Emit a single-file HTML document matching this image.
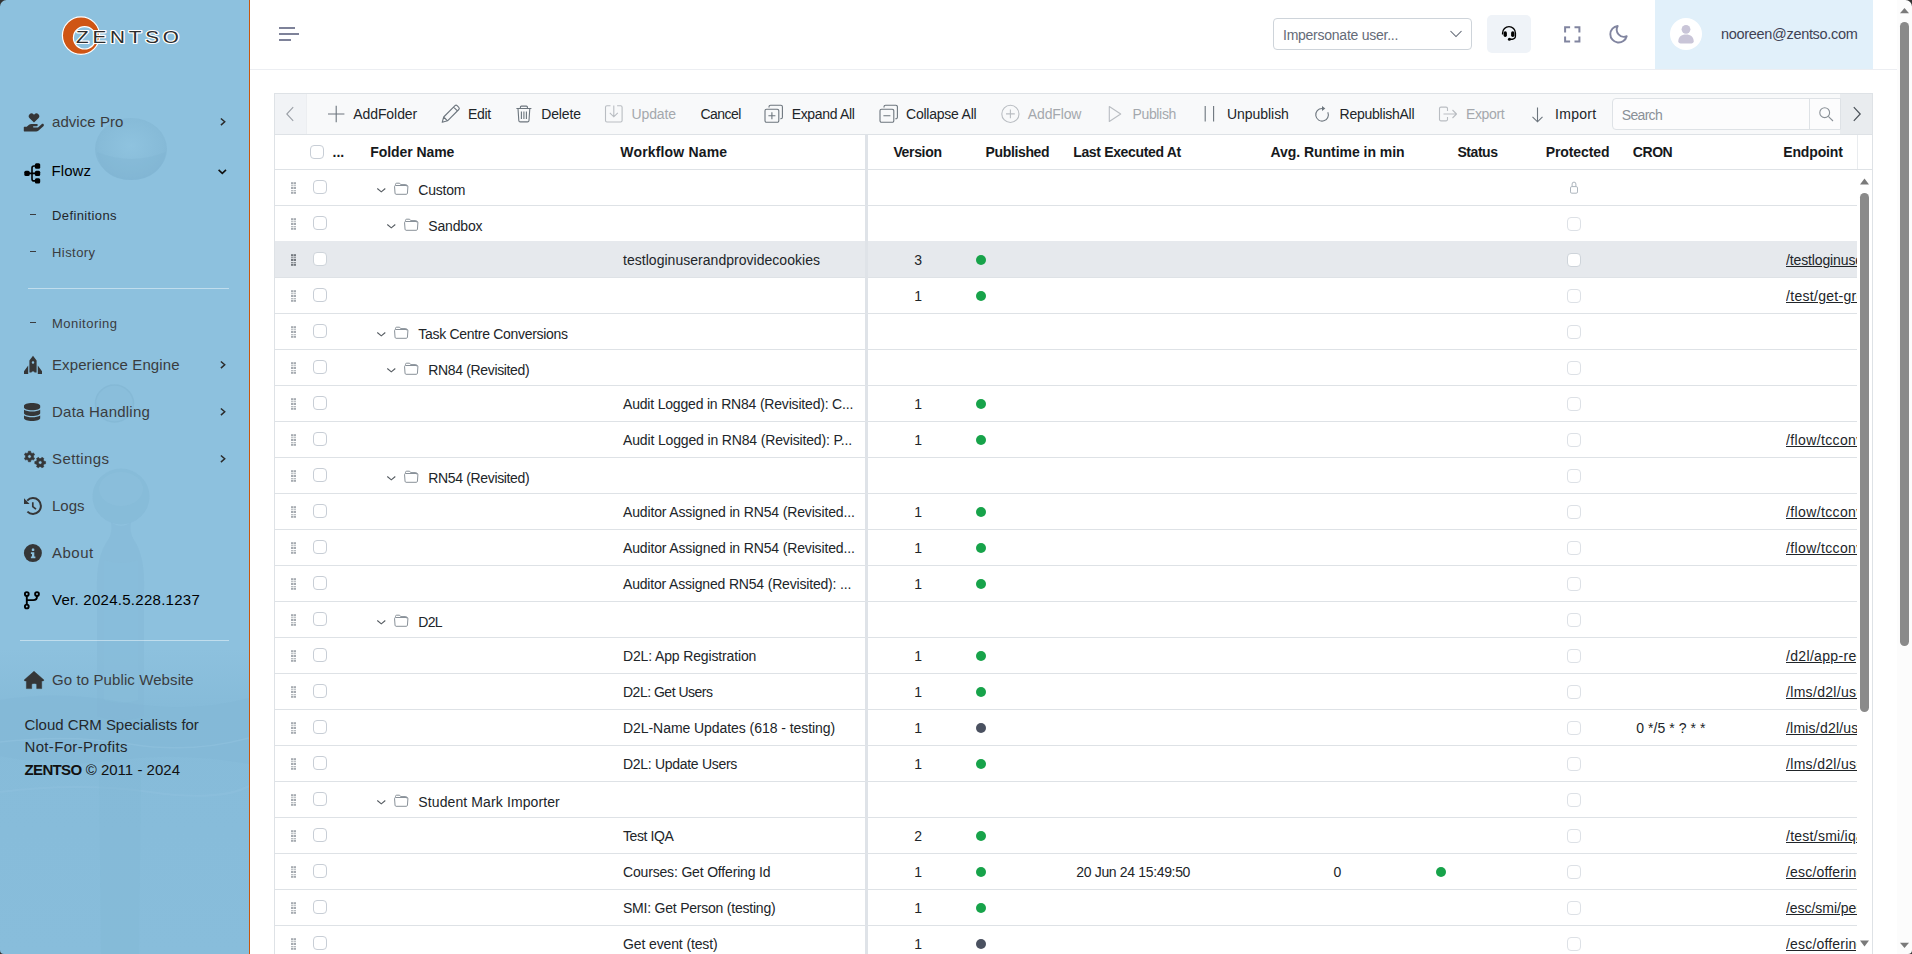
<!DOCTYPE html>
<html lang="en"><head><meta charset="utf-8"><title>Flowz Definitions</title>
<style>
*{box-sizing:border-box;margin:0;padding:0}
html,body{width:1912px;height:954px;overflow:hidden;background:#fff}
body{position:relative;font-family:"Liberation Sans",sans-serif;font-size:14px;color:#212529}
.t{position:absolute;white-space:nowrap;line-height:20px;height:20px}
svg{position:absolute;overflow:visible}
.abs{position:absolute}
/* sidebar */
.sidebar{position:absolute;left:0;top:0;width:250px;height:954px;border-right:1px solid #c8560c;background:#8cc0dd;overflow:hidden}
.sidebar .bgimg{position:absolute;left:0;top:0;width:249px;height:954px}
.sidebar .sep{position:absolute;height:1px;background:rgba(255,255,255,.45)}
/* topbar */
.topbar{position:absolute;left:250px;top:0;width:1647px;height:70px;border-bottom:1px solid #eceef2;background:#fff}
.cb{width:14px;height:14px;border:1px solid #c8ced6;border-radius:4px;background:#fff}
.cb.p{border-color:#dde1e6}
.cb.w{border-color:#ced4da}
.rl{left:275px;width:1582px;height:1px;background:#dee2e6}
.dot{width:10px;height:10px;border-radius:50%}
.ep{text-decoration:underline;overflow:hidden;color:#212529;font-size:14px}

</style></head>
<body>
<aside class="sidebar">
<svg class="bgimg" width="249" height="954" viewBox="0 0 249 954">
<defs>
<linearGradient id="bgv" x1="0" y1="0" x2="0" y2="1"><stop offset="0" stop-color="#8dc1de"/><stop offset=".68" stop-color="#8dc1de"/><stop offset=".74" stop-color="#86bbd9"/><stop offset="1" stop-color="#88bddb"/></linearGradient>
<radialGradient id="drop" cx=".5" cy=".45" r=".55"><stop offset="0" stop-color="#8fc3df"/><stop offset=".8" stop-color="#86bad7"/><stop offset="1" stop-color="#82b6d4"/></radialGradient>
</defs>
<rect width="249" height="954" fill="url(#bgv)"/>
<ellipse cx="131" cy="149" rx="36" ry="31" fill="url(#drop)" opacity=".9"/>
<path d="M97 152 Q131 166 166 152 Q160 180 131 180 Q102 180 97 152Z" fill="#7fb3d1" opacity=".4"/>
<ellipse cx="114.500" cy="403.500" rx="19" ry="18.500" fill="#8abedb" stroke="#84b8d5" stroke-width="1.500" opacity=".8"/>
<ellipse cx="121" cy="496.500" rx="28.500" ry="28" fill="#86bad7" opacity=".75"/>
<ellipse cx="121" cy="489" rx="22" ry="17" fill="#8bbfdc" opacity=".7"/>
<path d="M111 522 Q121 530 131 522 Q129 532 134 540 Q145 556 144 590 L144 716 Q121 724 97 716 L97 590 Q96 556 108 540 Q113 532 111 522Z" fill="#84b8d6" opacity=".5"/>
<path d="M104 560 Q121 566 138 560 L138 700 Q121 706 104 700Z" fill="#8abedb" opacity=".45"/>
<path d="M0 700 Q60 690 121 702 Q190 714 249 698 L249 764 Q180 752 121 760 Q60 768 0 756Z" fill="#7fb4d2" opacity=".32"/>
<path d="M0 742 Q70 734 130 744 T249 738" fill="none" stroke="#9acae3" stroke-width="1.500" opacity=".3"/>
<path d="M0 792 Q80 782 150 792 T249 786" fill="none" stroke="#96c7e1" stroke-width="2" opacity=".28"/>
<path d="M99 770 L141 770 L139 954 L101 954Z" fill="#82b7d5" opacity=".35"/>
</svg>
<svg class="logo" style="left:55px;top:8px" width="140" height="56" viewBox="55 8 140 56">
<path fill="#cf5514" stroke="#fff" stroke-width="1.2" fill-rule="evenodd" d="M81 16.8a18.6 18.8 0 1 0 0.01 37.6a18.6 18.8 0 1 0 -0.01 -37.6ZM84.6 26.6a11.2 11.2 0 1 1 -0.01 22.4a11.2 11.2 0 1 1 0.01 -22.4Z"/>
<text x="76" y="42.6" font-family="Liberation Sans, sans-serif" font-size="16.4" fill="#2d2d2d" stroke="#fff" stroke-width="2.2" paint-order="stroke" stroke-linejoin="round" letter-spacing="3" textLength="106.700" lengthAdjust="spacingAndGlyphs">ZENTSO</text>
</svg>
<svg style="left:24px;top:113px" width="21" height="19" viewBox="24 113 21 19" ><path fill="#353637" d="M34 122.6 29.6 118.2a2.75 2.75 0 0 1 3.9-3.9l.5.5.5-.5a2.75 2.75 0 0 1 3.9 3.9Z"/>
<path fill="#353637" transform="translate(0 .5)" d="M24.3 126.2h2.4l2.3-1.9c.7-.5 1.5-.8 2.4-.8h5.2c.7 0 1.2.5 1.2 1.1 0 .7-.5 1.2-1.2 1.2h-3c-.3 0-.6.2-.6.6 0 .3.3.5.6.5h4.4l3.6-3.2c.6-.5 1.5-.5 2 .1.5.6.4 1.400-.2 1.900l-5.1 4.500c-.6.500-1.300.800-2.100.800H24.300c-.300 0-.500-.200-.500-.500v-3.800c0-.300.200-.500.500-.500Z"/></svg>
<span class="t" style="left:52px;top:112.4px;font-size:15px;letter-spacing:0.06px;color:#3a3c3f;">advice Pro</span><svg style="left:219px;top:116px" width="10" height="12" viewBox="0 0 10 12"><path d="M1.900 2.500 5.700 5.800 1.900 9.100" fill="none" stroke="#2b2b2b" stroke-width="1.500"/></svg><svg style="left:23px;top:162px" width="19" height="23" viewBox="23 162 19 23" ><g fill="#000"><rect x="24.300" y="170.700" width="5.400" height="5.400" rx="1.500"/><rect x="34.900" y="163.300" width="5.300" height="5.400" rx="1.500"/><rect x="34.900" y="170.700" width="5.300" height="5.400" rx="1.500"/><rect x="34.900" y="178.200" width="5.300" height="5.400" rx="1.500"/></g>
<path fill="none" stroke="#000" stroke-width="1.600" d="M29 173.400h7M36 166h-2a2 2 0 0 0-2 2v10.900a2 2 0 0 0 2 2H36"/></svg>
<span class="t" style="left:51.5px;top:161px;font-size:15px;letter-spacing:0.07px;color:#000;">Flowz</span><svg style="left:216px;top:167px" width="12" height="10" viewBox="0 0 12 10"><path d="M2.600 2.900 6.300 6.400 10 2.900" fill="none" stroke="#111" stroke-width="1.600"/></svg><span class="abs" style="left:30px;top:213.5px;width:6px;height:1.5px;background:#3a3c3f"></span><span class="t" style="left:52px;top:205.5px;font-size:13px;letter-spacing:0.39px;color:#23272b;">Definitions</span><span class="abs" style="left:30px;top:250.5px;width:6px;height:1.5px;background:#3a3c3f"></span><span class="t" style="left:52px;top:242.5px;font-size:13px;letter-spacing:0.44px;color:#3a3c3f;">History</span><span class="sep" style="left:28px;top:288px;width:201px"></span><span class="abs" style="left:30px;top:321.5px;width:6px;height:1.5px;background:#3a3c3f"></span><span class="t" style="left:52px;top:313.5px;font-size:13px;letter-spacing:0.48px;color:#3a3c3f;">Monitoring</span><svg style="left:23px;top:355px" width="20" height="20" viewBox="23 355 20 20" ><path fill="#353637" fill-rule="evenodd" d="M33 355.800 36.600 360.600V372.600H34.600L34 371.400H32L31.400 372.600H29.400V360.600ZM33 361.300a1.250 1.250 0 1 0 0 2.500 1.250 1.250 0 0 0 0-2.500Z"/>
<path fill="#353637" d="M28.200 365.600V374H24V371.200ZM37.800 365.600V374H42V371.200Z"/></svg>
<span class="t" style="left:52px;top:355px;font-size:15px;letter-spacing:0.10px;color:#3a3c3f;">Experience Engine</span><svg style="left:219px;top:359px" width="10" height="12" viewBox="0 0 10 12"><path d="M1.900 2.500 5.700 5.800 1.900 9.100" fill="none" stroke="#2b2b2b" stroke-width="1.500"/></svg><svg style="left:23px;top:402px" width="19" height="20" viewBox="23 402 19 20" ><path fill="#353637" d="M24 405.800c0-1.500 3.600-2.800 8.100-2.800s8.100 1.300 8.100 2.800v1.600c0 1.500-3.600 2.800-8.100 2.800s-8.100-1.300-8.100-2.800ZM24 409.700c1.700 1.200 4.900 1.800 8.100 1.800s6.400-.600 8.100-1.800v3.500c0 1.500-3.600 2.800-8.100 2.800s-8.100-1.300-8.100-2.800ZM24 415.500c1.700 1.200 4.900 1.800 8.100 1.800s6.400-.600 8.100-1.800v2.700c0 1.500-3.600 2.800-8.100 2.800s-8.100-1.300-8.100-2.800Z"/></svg>
<span class="t" style="left:52px;top:402px;font-size:15px;letter-spacing:0.23px;color:#3a3c3f;">Data Handling</span><svg style="left:219px;top:406px" width="10" height="12" viewBox="0 0 10 12"><path d="M1.900 2.500 5.700 5.800 1.900 9.100" fill="none" stroke="#2b2b2b" stroke-width="1.500"/></svg><svg style="left:23px;top:450px" width="24" height="19" viewBox="23 450 24 19" ><path fill="#353637" stroke="#353637" stroke-width=".6" stroke-linejoin="round" fill-rule="evenodd" d="M30.62 461.78L28.38 461.78L28.18 460.28L26.89 459.53L25.49 460.11L24.36 458.17L25.57 457.25L25.57 455.75L24.36 454.83L25.49 452.89L26.89 453.47L28.18 452.72L28.38 451.22L30.62 451.22L30.82 452.72L32.11 453.47L33.51 452.89L34.64 454.83L33.43 455.75L33.43 457.25L34.64 458.17L33.51 460.11L32.11 459.53L30.82 460.28ZM27.75 456.50a1.75 1.75 0 1 0 3.5 0a1.75 1.75 0 1 0 -3.5 0Z"/><path fill="#353637" stroke="#353637" stroke-width=".6" stroke-linejoin="round" fill-rule="evenodd" d="M45.58 461.46L45.58 463.74L44.07 463.95L43.30 465.28L43.88 466.69L41.90 467.83L40.97 466.63L39.43 466.63L38.50 467.83L36.52 466.69L37.10 465.28L36.33 463.95L34.82 463.74L34.82 461.46L36.33 461.25L37.10 459.92L36.52 458.51L38.50 457.37L39.43 458.57L40.97 458.57L41.90 457.37L43.88 458.51L43.30 459.92L44.07 461.25ZM38.45 462.60a1.75 1.75 0 1 0 3.5 0a1.75 1.75 0 1 0 -3.5 0Z"/></svg>
<span class="t" style="left:52px;top:449px;font-size:15px;letter-spacing:0.40px;color:#3a3c3f;">Settings</span><svg style="left:219px;top:453px" width="10" height="12" viewBox="0 0 10 12"><path d="M1.900 2.500 5.700 5.800 1.900 9.100" fill="none" stroke="#2b2b2b" stroke-width="1.500"/></svg><svg style="left:23px;top:496px" width="20" height="20" viewBox="23 496 20 20" ><path fill="none" stroke="#353637" stroke-width="2" d="M27.220 500.610A7.900 7.900 0 1 1 27.410 511.590"/>
<path fill="#353637" d="M24 498.200V503.900H29.600Z"/>
<path fill="none" stroke="#353637" stroke-width="1.700" d="M32.800 502.200v4.400l3.200 2.600"/></svg>
<span class="t" style="left:52px;top:496px;font-size:15px;letter-spacing:-0.01px;color:#3a3c3f;">Logs</span><svg style="left:23px;top:543px" width="20" height="20" viewBox="23 543 20 20" ><circle cx="32.900" cy="553.100" r="9" fill="#353637"/><rect x="31.800" y="548.600" width="2.500" height="2.400" rx=".4" fill="#8cc0dd"/><path fill="#8cc0dd" d="M30.900 552.300h3.400v4.300h1.100v1.600H30.900v-1.600h1.100v-2.700h-1.100Z"/></svg>
<span class="t" style="left:52px;top:543px;font-size:15px;letter-spacing:0.48px;color:#3a3c3f;">About</span><svg style="left:22px;top:590px" width="20" height="20" viewBox="22 590 20 20" ><g fill="none" stroke="#000" stroke-width="1.900"><circle cx="26.800" cy="594" r="1.900"/><circle cx="26.800" cy="606.500" r="1.900"/><circle cx="37" cy="594" r="1.900"/><path d="M26.800 595.900v8.700M37 595.900v.600c0 2.600-1.400 3.600-3.800 3.600H27"/></g></svg>
<span class="t" style="left:52px;top:590px;font-size:15px;letter-spacing:0.27px;color:#000;">Ver. 2024.5.228.1237</span><span class="sep" style="left:20px;top:640px;width:209px"></span><svg style="left:23px;top:670px" width="23" height="20" viewBox="23 670 23 20" ><path fill="#353637" stroke="#353637" stroke-width=".5" stroke-linejoin="round" d="M34 671.300 44 680.100 43.300 680.900H41.700V688.600H36.700V684.600Q36.700 683.400 34.200 683.400Q31.700 683.400 31.700 684.600V688.600H26.400V680.900H24.800L24.100 680.100Z"/></svg>
<span class="t" style="left:52px;top:670px;font-size:15px;letter-spacing:0.10px;color:#3a3c3f;">Go to Public Website</span><span class="t" style="left:24.5px;top:715px;font-size:15px;letter-spacing:-0.03px;color:#23272b;">Cloud CRM Specialists for</span><span class="t" style="left:24.5px;top:737px;font-size:15px;letter-spacing:0.33px;color:#23272b;">Not-For-Profits</span><span class="t" style="left:24.500px;top:760px;font-size:15px;color:#111"><b style="letter-spacing:-0.64px;">ZENTSO</b><span style="letter-spacing:0.01px;"> © 2011 - 2024</span></span></aside>
<header>
<div class="topbar"></div>
<span class="abs" style="left:279px;top:27px;width:16px;height:2px;background:#7e8299"></span><span class="abs" style="left:279px;top:33px;width:20px;height:2px;background:#7e8299"></span><span class="abs" style="left:279px;top:39px;width:12px;height:2px;background:#7e8299"></span>
<div class="abs" style="left:1273px;top:18px;width:199px;height:32px;border:1px solid #ced4da;border-radius:4px;background:#fff"></div><span class="t" style="left:1283px;top:24.5px;font-size:14px;letter-spacing:-0.25px;color:#656b78;">Impersonate user...</span><svg style="left:1448px;top:28px" width="16" height="12" viewBox="0 0 16 12"><path d="M2.500 3 8 8.500 13.500 3" fill="none" stroke="#5c6370" stroke-width="1.050"/></svg>
<div class="abs" style="left:1487px;top:15px;width:44px;height:38px;border-radius:5px;background:#eff3f8"></div><svg style="left:1500px;top:25px" width="18" height="16" viewBox="1500 25 18 16"><path fill="none" stroke="#000" stroke-width="1.400" d="M1502.600 34.500v-1.500a6.400 6.400 0 0 1 12.800 0v3.200a3 3 0 0 1-3 3h-2.600"/><rect x="1503.600" y="31.300" width="3.300" height="5.600" rx="1.600" fill="#000"/><rect x="1511.100" y="31.300" width="3.300" height="5.600" rx="1.600" fill="#000"/><circle cx="1509.400" cy="39.200" r="1.500" fill="#000"/></svg>
<svg style="left:1563px;top:25px" width="18" height="18" viewBox="1563 25 18 18"><path fill="none" stroke="#8185a0" stroke-width="2" d="M1565.100 32.400v-5.100h5M1574.500 27.300h4.900v5.100M1579.400 36.500v5.100h-4.900M1570.100 41.600h-5v-5.100"/></svg>
<svg style="left:1608px;top:24px" width="20" height="20" viewBox="1608 24 20 20"><path fill="none" stroke="#8185a0" stroke-width="1.900" stroke-linejoin="round" d="M1617.700 26a8.300 8.300 0 1 0 9 10.200a7.200 7.200 0 0 1-9-10.200Z"/></svg>
<div class="abs" style="left:1655px;top:0;width:218px;height:69px;background:#e1f0fa"></div><svg style="left:1670px;top:18px" width="32" height="32" viewBox="0 0 32 32"><circle cx="16" cy="16" r="16" fill="#fff"/><circle cx="16" cy="11.300" r="4.400" fill="#c9c5d8"/><path fill="#c9c5d8" d="M8.300 23.300c0-4.200 3-6.700 7.700-6.700s7.700 2.500 7.700 6.700c0 1.400-1 2.100-2.300 2.100H10.600c-1.300 0-2.300-.700-2.300-2.100Z"/></svg>
<span class="t" style="left:1721px;top:23.5px;font-size:14.5px;letter-spacing:-0.31px;color:#3f4254;">nooreen@zentso.com</span></header>
<div class="abs" style="left:1897px;top:0;width:15px;height:954px;background:#fcfcfc"></div><div class="abs" style="left:1900px;top:22px;width:9px;height:624px;border-radius:5px;background:#8a8a8a"></div><svg style="left:1900px;top:7px" width="9" height="7" viewBox="0 0 11 8"><path d="M0 7.500 5.500 1 11 7.500Z" fill="#7a7a7a"/></svg><svg style="left:1900px;top:942px" width="9" height="7" viewBox="0 0 11 8"><path d="M0 .500 5.500 7 11 .500Z" fill="#7a7a7a"/></svg>
<main>
<div class="abs" style="left:274px;top:93px;width:1599px;height:870px;border:1px solid #dee2e6;background:#fff"></div>
<div class="abs" style="left:275px;top:94px;width:1597px;height:40px;background:#f8f9fa"></div><div class="abs" style="left:275px;top:134px;width:1597px;height:1px;background:#dee2e6"></div><div class="abs" style="left:275px;top:94px;width:32px;height:40px;background:#f1f3f6;border-right:1px solid #eceef1"></div><svg style="left:285px;top:106px" width="10" height="16" viewBox="0 0 10 16"><path d="M8.200 1.200 1.800 8l6.400 6.800" fill="none" stroke="#9a9fa6" stroke-width="1.100"/></svg><div class="abs" style="left:1840px;top:94px;width:32px;height:40px;background:#e9ecef"></div><svg style="left:1852px;top:106px" width="10" height="16" viewBox="0 0 10 16"><path d="M1.800 1.200 8.200 8l-6.400 6.800" fill="none" stroke="#495057" stroke-width="1.200"/></svg>
<svg style="left:327px;top:105px" width="18" height="18" viewBox="327 105 18 18"><path d="M328 114h16.400M336.200 105.800v16.400" stroke="#6c757d" stroke-width="1.100" fill="none"/></svg><span class="t" style="left:353.2px;top:104.2px;font-size:14px;letter-spacing:-0.07px;color:#212529;">AddFolder</span><svg style="left:441px;top:104px" width="19" height="19" viewBox="441 104 19 19"><path fill="none" stroke="#6c757d" stroke-width="1.100" stroke-linejoin="round" d="M442.200 122.300l1.500-5.300 11.300-11.300a1.500 1.500 0 0 1 2.100 0l1.700 1.700a1.500 1.500 0 0 1 0 2.100l-11.300 11.300ZM443.700 117l3.800 3.800M453.600 107.100l3.800 3.800"/></svg><span class="t" style="left:468px;top:104.2px;font-size:14px;letter-spacing:-0.33px;color:#212529;">Edit</span><svg style="left:515px;top:105px" width="18" height="18" viewBox="515 105 18 18"><path fill="none" stroke="#6c757d" stroke-width="1.100" d="M516.400 108.500h15M520.400 108.300v-1.200a1 1 0 0 1 1-1h5a1 1 0 0 1 1 1v1.200M518 108.500l.800 12a1.500 1.500 0 0 0 1.500 1.400h7.200a1.500 1.500 0 0 0 1.500-1.400l.800-12M521.400 111.500v7.500M523.900 111.500v7.500M526.400 111.500v7.500"/></svg><span class="t" style="left:541.3px;top:104.2px;font-size:14px;letter-spacing:-0.16px;color:#212529;">Delete</span><svg style="left:604px;top:104px" width="20" height="20" viewBox="604 104 20 20"><path fill="none" stroke="#b9bdc2" stroke-width="1.100" d="M610.500 105.800h-3.500a1.500 1.500 0 0 0-1.500 1.500v13.200a1.500 1.500 0 0 0 1.500 1.500h13.600a1.500 1.500 0 0 0 1.500-1.500v-13.200a1.500 1.500 0 0 0-1.500-1.500h-3.500M613.800 105.500v11M609.800 112.800l4 4 4-4"/></svg><span class="t" style="left:631.6px;top:104.2px;font-size:14px;letter-spacing:-0.14px;color:#a4a8ad;">Update</span><span class="t" style="left:700.5px;top:104.2px;font-size:14px;letter-spacing:-0.56px;color:#212529;">Cancel</span><svg style="left:764px;top:104px" width="20" height="20" viewBox="764 104 20 20"><path fill="none" stroke="#6c757d" stroke-width="1.100" d="M766.5 109.300h10.800a1.500 1.500 0 0 1 1.500 1.500v10a1.500 1.500 0 0 1-1.500 1.500h-10.800a1.500 1.500 0 0 1-1.500-1.500v-10a1.500 1.500 0 0 1 1.500-1.500ZM769 107.500v-.700a1.500 1.500 0 0 1 1.500-1.500h10.400a1.500 1.500 0 0 1 1.500 1.500v10.500a1.500 1.500 0 0 1-1.500 1.500h-.600M768.4 115.800h7M771.9 112.300v7"/></svg><span class="t" style="left:791.7px;top:104.2px;font-size:14px;letter-spacing:-0.33px;color:#212529;">Expand All</span><svg style="left:879px;top:104px" width="20" height="20" viewBox="879 104 20 20"><path fill="none" stroke="#6c757d" stroke-width="1.100" d="M881.5 109.300h10.800a1.500 1.500 0 0 1 1.500 1.500v10a1.500 1.500 0 0 1-1.500 1.500h-10.800a1.500 1.500 0 0 1-1.500-1.500v-10a1.500 1.500 0 0 1 1.500-1.500ZM884 107.500v-.700a1.500 1.500 0 0 1 1.500-1.500h10.400a1.500 1.500 0 0 1 1.500 1.500v10.500a1.500 1.500 0 0 1-1.500 1.500h-.600M883.4 115.800h7"/></svg><span class="t" style="left:906px;top:104.2px;font-size:14px;letter-spacing:-0.23px;color:#212529;">Collapse All</span><svg style="left:1000px;top:104px" width="21" height="21" viewBox="1000 104 21 21"><circle cx="1010.400" cy="113.900" r="8.600" fill="none" stroke="#b9bdc2" stroke-width="1.100"/><path d="M1006 113.900h8.800M1010.400 109.500v8.800" fill="none" stroke="#b9bdc2" stroke-width="1.100"/></svg><span class="t" style="left:1027.8px;top:104.2px;font-size:14px;letter-spacing:-0.14px;color:#a4a8ad;">AddFlow</span><svg style="left:1107px;top:105px" width="16" height="18" viewBox="1107 105 16 18"><path d="M1109.300 106.500v15l11.400-7.500Z" fill="none" stroke="#b9bdc2" stroke-width="1.100" stroke-linejoin="round"/></svg><span class="t" style="left:1132.5px;top:104.2px;font-size:14px;letter-spacing:-0.35px;color:#a4a8ad;">Publish</span><svg style="left:1203px;top:105px" width="13" height="18" viewBox="1203 105 13 18"><path d="M1205.200 106v15.600M1213.600 106v15.600" fill="none" stroke="#6c757d" stroke-width="1.100"/></svg><span class="t" style="left:1227px;top:104.2px;font-size:14px;letter-spacing:-0.05px;color:#212529;">Unpublish</span><svg style="left:1313px;top:104px" width="18" height="19" viewBox="1313 104 18 19"><path fill="none" stroke="#6c757d" stroke-width="1.100" d="M1322 108.500A6.300 6.300 0 1 0 1327.800 112.200"/><path fill="#6c757d" d="M1322 105.900 1325.300 108.500 1322 111.100Z"/></svg><span class="t" style="left:1339.6px;top:104.2px;font-size:14px;letter-spacing:-0.26px;color:#212529;">RepublishAll</span><svg style="left:1438px;top:106px" width="21" height="16" viewBox="1438 106 21 16"><path fill="none" stroke="#b9bdc2" stroke-width="1.100" stroke-linejoin="round" d="M1447.500 111v-2.400a1.500 1.500 0 0 0-1.500-1.500h-5a1.500 1.500 0 0 0-1.500 1.500v10.800a1.500 1.500 0 0 0 1.500 1.500h5a1.500 1.500 0 0 0 1.500-1.500V117M1443.500 114h13M1452.500 110l4 4-4 4"/></svg><span class="t" style="left:1465.9px;top:104.2px;font-size:14px;letter-spacing:-0.34px;color:#a4a8ad;">Export</span><svg style="left:1531px;top:106px" width="14" height="17" viewBox="1531 106 14 17"><path fill="none" stroke="#6c757d" stroke-width="1.100" d="M1537.500 107.500v14M1532.500 116.800l5 5 5-5"/></svg><span class="t" style="left:1555.1px;top:104.2px;font-size:14px;letter-spacing:0.27px;color:#212529;">Import</span><div class="abs" style="left:1612px;top:98px;width:229px;height:32px;border:1px solid #dee2e6;border-radius:4px 0 0 4px;background:#fcfcfd"></div><div class="abs" style="left:1809px;top:99px;width:1px;height:30px;background:#dee2e6"></div><span class="t" style="left:1621.8px;top:104.8px;font-size:14px;letter-spacing:-0.69px;color:#8a9097;">Search</span><svg style="left:1818px;top:106px" width="17" height="17" viewBox="1818 106 17 17"><circle cx="1824.700" cy="112.700" r="4.900" fill="none" stroke="#8a9097" stroke-width="1.100"/><path d="M1828.300 116.300l4.700 4.700" stroke="#8a9097" stroke-width="1.100"/></svg>
<div class="abs" style="left:275px;top:169px;width:1597px;height:1px;background:#dee2e6"></div><span class="abs cb" style="left:310px;top:145px"></span><span class="t" style="left:332.6px;top:142.1px;font-size:14px;letter-spacing:-0.02px;font-weight:700;color:#16191c;">...</span><span class="t" style="left:370.3px;top:142.1px;font-size:14px;letter-spacing:-0.07px;font-weight:700;color:#16191c;">Folder Name</span><span class="t" style="left:620.3px;top:142.1px;font-size:14px;letter-spacing:0.17px;font-weight:700;color:#16191c;">Workflow Name</span><span class="t" style="left:893.4px;top:142.1px;font-size:14px;letter-spacing:-0.34px;font-weight:700;color:#16191c;">Version</span><span class="t" style="left:985.6px;top:142.1px;font-size:14px;letter-spacing:-0.37px;font-weight:700;color:#16191c;">Published</span><span class="t" style="left:1073.2px;top:142.1px;font-size:14px;letter-spacing:-0.34px;font-weight:700;color:#16191c;">Last Executed At</span><span class="t" style="left:1270.4px;top:142.1px;font-size:14px;letter-spacing:-0.03px;font-weight:700;color:#16191c;">Avg. Runtime in min</span><span class="t" style="left:1457.4px;top:142.1px;font-size:14px;letter-spacing:-0.43px;font-weight:700;color:#16191c;">Status</span><span class="t" style="left:1545.7px;top:142.1px;font-size:14px;letter-spacing:-0.10px;font-weight:700;color:#16191c;">Protected</span><span class="t" style="left:1632.8px;top:142.1px;font-size:14px;letter-spacing:-0.43px;font-weight:700;color:#16191c;">CRON</span><span class="t" style="left:1783.2px;top:142.1px;font-size:14px;letter-spacing:-0.13px;font-weight:700;color:#16191c;">Endpoint</span><div class="abs" style="left:1857px;top:135px;width:1px;height:34px;background:#e9ecef"></div>
<div class="abs rl" style="top:205px"></div><svg style="left:290.5px;top:182px" width="5" height="12" viewBox="0 0 5 12" fill="#a6abb1"><rect x="0" y="0.2" width="2.300" height="2.1"/><rect x="2.700" y="0.2" width="2.300" height="2.1"/><rect x="0" y="3.3" width="2.300" height="0.8"/><rect x="2.700" y="3.3" width="2.300" height="0.8"/><rect x="0" y="4.9" width="2.300" height="2.1"/><rect x="2.700" y="4.9" width="2.300" height="2.1"/><rect x="0" y="8.0" width="2.300" height="0.8"/><rect x="2.700" y="8.0" width="2.300" height="0.8"/><rect x="0" y="9.7" width="2.300" height="2.1"/><rect x="2.700" y="9.7" width="2.300" height="2.1"/></svg><span class="abs cb" style="left:313px;top:180px"></span><svg style="left:376px;top:187px" width="11" height="8" viewBox="0 0 11 8"><path d="M1.300 1.500 5.300 4.900 9.300 1.500" fill="none" stroke="#555b61" stroke-width="1.100"/></svg><svg style="left:394px;top:182px" width="14.200" height="13" viewBox="0 0 15 13" preserveAspectRatio="none"><path fill="none" stroke="#868e96" stroke-width="1" stroke-linejoin="round" d="M1.600 3.200V2.400a1.200 1.200 0 0 1 1.200-1.200h3.100l1.200 1.400h5.400a1.200 1.200 0 0 1 1.200 1.200v.700M2.200 12.300h10.800a1.200 1.200 0 0 0 1.200-1.100l.500-6.500a1.100 1.100 0 0 0-1.100-1.200H1.700a1.100 1.100 0 0 0-1.100 1.200l.500 6.500a1.200 1.200 0 0 0 1.100 1.100Z"/></svg><span class="t" style="left:418.3px;top:180px;font-size:14px;letter-spacing:-0.21px;color:#212529;">Custom</span><svg style="left:1569px;top:181px" width="10" height="13" viewBox="0 0 10 13"><rect x="1.500" y="5.600" width="7" height="6.600" rx="1.300" fill="none" stroke="#adb5bd" stroke-width="1"/><path d="M3.100 5.600V3a1.900 1.900 0 0 1 3.800 0v2.600" fill="none" stroke="#adb5bd" stroke-width="1"/></svg>
<div class="abs rl" style="top:241px"></div><svg style="left:290.5px;top:218px" width="5" height="12" viewBox="0 0 5 12" fill="#a6abb1"><rect x="0" y="0.2" width="2.300" height="2.1"/><rect x="2.700" y="0.2" width="2.300" height="2.1"/><rect x="0" y="3.3" width="2.300" height="0.8"/><rect x="2.700" y="3.3" width="2.300" height="0.8"/><rect x="0" y="4.9" width="2.300" height="2.1"/><rect x="2.700" y="4.9" width="2.300" height="2.1"/><rect x="0" y="8.0" width="2.300" height="0.8"/><rect x="2.700" y="8.0" width="2.300" height="0.8"/><rect x="0" y="9.7" width="2.300" height="2.1"/><rect x="2.700" y="9.7" width="2.300" height="2.1"/></svg><span class="abs cb" style="left:313px;top:216px"></span><svg style="left:386px;top:223px" width="11" height="8" viewBox="0 0 11 8"><path d="M1.300 1.500 5.300 4.900 9.300 1.500" fill="none" stroke="#555b61" stroke-width="1.100"/></svg><svg style="left:404px;top:218px" width="14.200" height="13" viewBox="0 0 15 13" preserveAspectRatio="none"><path fill="none" stroke="#868e96" stroke-width="1" stroke-linejoin="round" d="M1.600 3.200V2.400a1.200 1.200 0 0 1 1.200-1.200h3.100l1.200 1.400h5.400a1.200 1.200 0 0 1 1.200 1.200v.700M2.200 12.300h10.800a1.200 1.200 0 0 0 1.200-1.100l.500-6.500a1.100 1.100 0 0 0-1.100-1.200H1.700a1.100 1.100 0 0 0-1.100 1.200l.500 6.500a1.200 1.200 0 0 0 1.100 1.100Z"/></svg><span class="t" style="left:428.3px;top:216px;font-size:14px;letter-spacing:-0.18px;color:#212529;">Sandbox</span><span class="abs cb p" style="left:1567px;top:217px"></span>
<div class="abs" style="left:275px;top:241px;width:1582px;height:37px;background:#e6e9ed"></div><div class="abs rl" style="top:277px"></div><svg style="left:290.5px;top:254px" width="5" height="12" viewBox="0 0 5 12" fill="#73787e"><rect x="0" y="0.2" width="2.300" height="2.1"/><rect x="2.700" y="0.2" width="2.300" height="2.1"/><rect x="0" y="3.3" width="2.300" height="0.8"/><rect x="2.700" y="3.3" width="2.300" height="0.8"/><rect x="0" y="4.9" width="2.300" height="2.1"/><rect x="2.700" y="4.9" width="2.300" height="2.1"/><rect x="0" y="8.0" width="2.300" height="0.8"/><rect x="2.700" y="8.0" width="2.300" height="0.8"/><rect x="0" y="9.7" width="2.300" height="2.1"/><rect x="2.700" y="9.7" width="2.300" height="2.1"/></svg><span class="abs cb w" style="left:313px;top:252px"></span><span class="t" style="left:623px;top:250px;font-size:14px;letter-spacing:0.03px;color:#212529;">testloginuserandprovidecookies</span><span class="t" style="left:914.2px;top:250px;font-size:14px;color:#212529;width:8px;text-align:center;">3</span><span class="abs dot" style="left:976px;top:255px;background:#17a34a"></span><span class="abs cb p w" style="left:1567px;top:253px"></span><span class="t ep" style="left:1786px;top:250px;width:71px;letter-spacing:-0.13px;">/testloginuserandprovidecookies</span>
<div class="abs rl" style="top:313px"></div><svg style="left:290.5px;top:290px" width="5" height="12" viewBox="0 0 5 12" fill="#a6abb1"><rect x="0" y="0.2" width="2.300" height="2.1"/><rect x="2.700" y="0.2" width="2.300" height="2.1"/><rect x="0" y="3.3" width="2.300" height="0.8"/><rect x="2.700" y="3.3" width="2.300" height="0.8"/><rect x="0" y="4.9" width="2.300" height="2.1"/><rect x="2.700" y="4.9" width="2.300" height="2.1"/><rect x="0" y="8.0" width="2.300" height="0.8"/><rect x="2.700" y="8.0" width="2.300" height="0.8"/><rect x="0" y="9.7" width="2.300" height="2.1"/><rect x="2.700" y="9.7" width="2.300" height="2.1"/></svg><span class="abs cb" style="left:313px;top:288px"></span><span class="t" style="left:914.2px;top:286px;font-size:14px;color:#212529;width:8px;text-align:center;">1</span><span class="abs dot" style="left:976px;top:291px;background:#17a34a"></span><span class="abs cb p" style="left:1567px;top:289px"></span><span class="t ep" style="left:1786px;top:286px;width:71px;letter-spacing:0.30px;">/test/get-group</span>
<div class="abs rl" style="top:349px"></div><svg style="left:290.5px;top:326px" width="5" height="12" viewBox="0 0 5 12" fill="#a6abb1"><rect x="0" y="0.2" width="2.300" height="2.1"/><rect x="2.700" y="0.2" width="2.300" height="2.1"/><rect x="0" y="3.3" width="2.300" height="0.8"/><rect x="2.700" y="3.3" width="2.300" height="0.8"/><rect x="0" y="4.9" width="2.300" height="2.1"/><rect x="2.700" y="4.9" width="2.300" height="2.1"/><rect x="0" y="8.0" width="2.300" height="0.8"/><rect x="2.700" y="8.0" width="2.300" height="0.8"/><rect x="0" y="9.7" width="2.300" height="2.1"/><rect x="2.700" y="9.7" width="2.300" height="2.1"/></svg><span class="abs cb" style="left:313px;top:324px"></span><svg style="left:376px;top:331px" width="11" height="8" viewBox="0 0 11 8"><path d="M1.300 1.500 5.300 4.900 9.300 1.500" fill="none" stroke="#555b61" stroke-width="1.100"/></svg><svg style="left:394px;top:326px" width="14.200" height="13" viewBox="0 0 15 13" preserveAspectRatio="none"><path fill="none" stroke="#868e96" stroke-width="1" stroke-linejoin="round" d="M1.600 3.200V2.400a1.200 1.200 0 0 1 1.200-1.200h3.100l1.200 1.400h5.400a1.200 1.200 0 0 1 1.200 1.200v.700M2.200 12.300h10.800a1.200 1.200 0 0 0 1.200-1.100l.500-6.500a1.100 1.100 0 0 0-1.100-1.200H1.700a1.100 1.100 0 0 0-1.100 1.200l.500 6.500a1.200 1.200 0 0 0 1.100 1.100Z"/></svg><span class="t" style="left:418.3px;top:324px;font-size:14px;letter-spacing:-0.30px;color:#212529;">Task Centre Conversions</span><span class="abs cb p" style="left:1567px;top:325px"></span>
<div class="abs rl" style="top:385px"></div><svg style="left:290.5px;top:362px" width="5" height="12" viewBox="0 0 5 12" fill="#a6abb1"><rect x="0" y="0.2" width="2.300" height="2.1"/><rect x="2.700" y="0.2" width="2.300" height="2.1"/><rect x="0" y="3.3" width="2.300" height="0.8"/><rect x="2.700" y="3.3" width="2.300" height="0.8"/><rect x="0" y="4.9" width="2.300" height="2.1"/><rect x="2.700" y="4.9" width="2.300" height="2.1"/><rect x="0" y="8.0" width="2.300" height="0.8"/><rect x="2.700" y="8.0" width="2.300" height="0.8"/><rect x="0" y="9.7" width="2.300" height="2.1"/><rect x="2.700" y="9.7" width="2.300" height="2.1"/></svg><span class="abs cb" style="left:313px;top:360px"></span><svg style="left:386px;top:367px" width="11" height="8" viewBox="0 0 11 8"><path d="M1.300 1.500 5.300 4.900 9.300 1.500" fill="none" stroke="#555b61" stroke-width="1.100"/></svg><svg style="left:404px;top:362px" width="14.200" height="13" viewBox="0 0 15 13" preserveAspectRatio="none"><path fill="none" stroke="#868e96" stroke-width="1" stroke-linejoin="round" d="M1.600 3.200V2.400a1.200 1.200 0 0 1 1.200-1.200h3.100l1.200 1.400h5.400a1.200 1.200 0 0 1 1.200 1.200v.700M2.200 12.300h10.800a1.200 1.200 0 0 0 1.200-1.100l.500-6.500a1.100 1.100 0 0 0-1.100-1.200H1.700a1.100 1.100 0 0 0-1.100 1.200l.500 6.500a1.200 1.200 0 0 0 1.100 1.100Z"/></svg><span class="t" style="left:428.3px;top:360px;font-size:14px;letter-spacing:-0.35px;color:#212529;">RN84 (Revisited)</span><span class="abs cb p" style="left:1567px;top:361px"></span>
<div class="abs rl" style="top:421px"></div><svg style="left:290.5px;top:398px" width="5" height="12" viewBox="0 0 5 12" fill="#a6abb1"><rect x="0" y="0.2" width="2.300" height="2.1"/><rect x="2.700" y="0.2" width="2.300" height="2.1"/><rect x="0" y="3.3" width="2.300" height="0.8"/><rect x="2.700" y="3.3" width="2.300" height="0.8"/><rect x="0" y="4.9" width="2.300" height="2.1"/><rect x="2.700" y="4.9" width="2.300" height="2.1"/><rect x="0" y="8.0" width="2.300" height="0.8"/><rect x="2.700" y="8.0" width="2.300" height="0.8"/><rect x="0" y="9.7" width="2.300" height="2.1"/><rect x="2.700" y="9.7" width="2.300" height="2.1"/></svg><span class="abs cb" style="left:313px;top:396px"></span><span class="t" style="left:623px;top:394px;font-size:14px;letter-spacing:-0.19px;color:#212529;">Audit Logged in RN84 (Revisited): C...</span><span class="t" style="left:914.2px;top:394px;font-size:14px;color:#212529;width:8px;text-align:center;">1</span><span class="abs dot" style="left:976px;top:399px;background:#17a34a"></span><span class="abs cb p" style="left:1567px;top:397px"></span>
<div class="abs rl" style="top:457px"></div><svg style="left:290.5px;top:434px" width="5" height="12" viewBox="0 0 5 12" fill="#a6abb1"><rect x="0" y="0.2" width="2.300" height="2.1"/><rect x="2.700" y="0.2" width="2.300" height="2.1"/><rect x="0" y="3.3" width="2.300" height="0.8"/><rect x="2.700" y="3.3" width="2.300" height="0.8"/><rect x="0" y="4.9" width="2.300" height="2.1"/><rect x="2.700" y="4.9" width="2.300" height="2.1"/><rect x="0" y="8.0" width="2.300" height="0.8"/><rect x="2.700" y="8.0" width="2.300" height="0.8"/><rect x="0" y="9.7" width="2.300" height="2.1"/><rect x="2.700" y="9.7" width="2.300" height="2.1"/></svg><span class="abs cb" style="left:313px;top:432px"></span><span class="t" style="left:623px;top:430px;font-size:14px;letter-spacing:-0.15px;color:#212529;">Audit Logged in RN84 (Revisited): P...</span><span class="t" style="left:914.2px;top:430px;font-size:14px;color:#212529;width:8px;text-align:center;">1</span><span class="abs dot" style="left:976px;top:435px;background:#17a34a"></span><span class="abs cb p" style="left:1567px;top:433px"></span><span class="t ep" style="left:1786px;top:430px;width:71px;letter-spacing:0.37px;">/flow/tcconversion</span>
<div class="abs rl" style="top:493px"></div><svg style="left:290.5px;top:470px" width="5" height="12" viewBox="0 0 5 12" fill="#a6abb1"><rect x="0" y="0.2" width="2.300" height="2.1"/><rect x="2.700" y="0.2" width="2.300" height="2.1"/><rect x="0" y="3.3" width="2.300" height="0.8"/><rect x="2.700" y="3.3" width="2.300" height="0.8"/><rect x="0" y="4.9" width="2.300" height="2.1"/><rect x="2.700" y="4.9" width="2.300" height="2.1"/><rect x="0" y="8.0" width="2.300" height="0.8"/><rect x="2.700" y="8.0" width="2.300" height="0.8"/><rect x="0" y="9.7" width="2.300" height="2.1"/><rect x="2.700" y="9.7" width="2.300" height="2.1"/></svg><span class="abs cb" style="left:313px;top:468px"></span><svg style="left:386px;top:475px" width="11" height="8" viewBox="0 0 11 8"><path d="M1.300 1.500 5.300 4.900 9.300 1.500" fill="none" stroke="#555b61" stroke-width="1.100"/></svg><svg style="left:404px;top:470px" width="14.200" height="13" viewBox="0 0 15 13" preserveAspectRatio="none"><path fill="none" stroke="#868e96" stroke-width="1" stroke-linejoin="round" d="M1.600 3.200V2.400a1.200 1.200 0 0 1 1.200-1.200h3.100l1.200 1.400h5.400a1.200 1.200 0 0 1 1.200 1.200v.700M2.200 12.300h10.800a1.200 1.200 0 0 0 1.200-1.100l.500-6.500a1.100 1.100 0 0 0-1.100-1.200H1.700a1.100 1.100 0 0 0-1.100 1.200l.500 6.500a1.200 1.200 0 0 0 1.100 1.100Z"/></svg><span class="t" style="left:428.3px;top:468px;font-size:14px;letter-spacing:-0.35px;color:#212529;">RN54 (Revisited)</span><span class="abs cb p" style="left:1567px;top:469px"></span>
<div class="abs rl" style="top:529px"></div><svg style="left:290.5px;top:506px" width="5" height="12" viewBox="0 0 5 12" fill="#a6abb1"><rect x="0" y="0.2" width="2.300" height="2.1"/><rect x="2.700" y="0.2" width="2.300" height="2.1"/><rect x="0" y="3.3" width="2.300" height="0.8"/><rect x="2.700" y="3.3" width="2.300" height="0.8"/><rect x="0" y="4.9" width="2.300" height="2.1"/><rect x="2.700" y="4.9" width="2.300" height="2.1"/><rect x="0" y="8.0" width="2.300" height="0.8"/><rect x="2.700" y="8.0" width="2.300" height="0.8"/><rect x="0" y="9.7" width="2.300" height="2.1"/><rect x="2.700" y="9.7" width="2.300" height="2.1"/></svg><span class="abs cb" style="left:313px;top:504px"></span><span class="t" style="left:623px;top:502px;font-size:14px;letter-spacing:-0.15px;color:#212529;">Auditor Assigned in RN54 (Revisited...</span><span class="t" style="left:914.2px;top:502px;font-size:14px;color:#212529;width:8px;text-align:center;">1</span><span class="abs dot" style="left:976px;top:507px;background:#17a34a"></span><span class="abs cb p" style="left:1567px;top:505px"></span><span class="t ep" style="left:1786px;top:502px;width:71px;letter-spacing:0.37px;">/flow/tcconversion</span>
<div class="abs rl" style="top:565px"></div><svg style="left:290.5px;top:542px" width="5" height="12" viewBox="0 0 5 12" fill="#a6abb1"><rect x="0" y="0.2" width="2.300" height="2.1"/><rect x="2.700" y="0.2" width="2.300" height="2.1"/><rect x="0" y="3.3" width="2.300" height="0.8"/><rect x="2.700" y="3.3" width="2.300" height="0.8"/><rect x="0" y="4.9" width="2.300" height="2.1"/><rect x="2.700" y="4.9" width="2.300" height="2.1"/><rect x="0" y="8.0" width="2.300" height="0.8"/><rect x="2.700" y="8.0" width="2.300" height="0.8"/><rect x="0" y="9.7" width="2.300" height="2.1"/><rect x="2.700" y="9.7" width="2.300" height="2.1"/></svg><span class="abs cb" style="left:313px;top:540px"></span><span class="t" style="left:623px;top:538px;font-size:14px;letter-spacing:-0.15px;color:#212529;">Auditor Assigned in RN54 (Revisited...</span><span class="t" style="left:914.2px;top:538px;font-size:14px;color:#212529;width:8px;text-align:center;">1</span><span class="abs dot" style="left:976px;top:543px;background:#17a34a"></span><span class="abs cb p" style="left:1567px;top:541px"></span><span class="t ep" style="left:1786px;top:538px;width:71px;letter-spacing:0.37px;">/flow/tcconversion</span>
<div class="abs rl" style="top:601px"></div><svg style="left:290.5px;top:578px" width="5" height="12" viewBox="0 0 5 12" fill="#a6abb1"><rect x="0" y="0.2" width="2.300" height="2.1"/><rect x="2.700" y="0.2" width="2.300" height="2.1"/><rect x="0" y="3.3" width="2.300" height="0.8"/><rect x="2.700" y="3.3" width="2.300" height="0.8"/><rect x="0" y="4.9" width="2.300" height="2.1"/><rect x="2.700" y="4.9" width="2.300" height="2.1"/><rect x="0" y="8.0" width="2.300" height="0.8"/><rect x="2.700" y="8.0" width="2.300" height="0.8"/><rect x="0" y="9.7" width="2.300" height="2.1"/><rect x="2.700" y="9.7" width="2.300" height="2.1"/></svg><span class="abs cb" style="left:313px;top:576px"></span><span class="t" style="left:623px;top:574px;font-size:14px;letter-spacing:-0.18px;color:#212529;">Auditor Assigned RN54 (Revisited): ...</span><span class="t" style="left:914.2px;top:574px;font-size:14px;color:#212529;width:8px;text-align:center;">1</span><span class="abs dot" style="left:976px;top:579px;background:#17a34a"></span><span class="abs cb p" style="left:1567px;top:577px"></span>
<div class="abs rl" style="top:637px"></div><svg style="left:290.5px;top:614px" width="5" height="12" viewBox="0 0 5 12" fill="#a6abb1"><rect x="0" y="0.2" width="2.300" height="2.1"/><rect x="2.700" y="0.2" width="2.300" height="2.1"/><rect x="0" y="3.3" width="2.300" height="0.8"/><rect x="2.700" y="3.3" width="2.300" height="0.8"/><rect x="0" y="4.9" width="2.300" height="2.1"/><rect x="2.700" y="4.9" width="2.300" height="2.1"/><rect x="0" y="8.0" width="2.300" height="0.8"/><rect x="2.700" y="8.0" width="2.300" height="0.8"/><rect x="0" y="9.7" width="2.300" height="2.1"/><rect x="2.700" y="9.7" width="2.300" height="2.1"/></svg><span class="abs cb" style="left:313px;top:612px"></span><svg style="left:376px;top:619px" width="11" height="8" viewBox="0 0 11 8"><path d="M1.300 1.500 5.300 4.900 9.300 1.500" fill="none" stroke="#555b61" stroke-width="1.100"/></svg><svg style="left:394px;top:614px" width="14.200" height="13" viewBox="0 0 15 13" preserveAspectRatio="none"><path fill="none" stroke="#868e96" stroke-width="1" stroke-linejoin="round" d="M1.600 3.200V2.400a1.200 1.200 0 0 1 1.200-1.200h3.100l1.200 1.400h5.400a1.200 1.200 0 0 1 1.200 1.200v.700M2.200 12.300h10.800a1.200 1.200 0 0 0 1.200-1.100l.500-6.500a1.100 1.100 0 0 0-1.100-1.200H1.700a1.100 1.100 0 0 0-1.100 1.200l.500 6.500a1.200 1.200 0 0 0 1.100 1.100Z"/></svg><span class="t" style="left:418.3px;top:612px;font-size:14px;letter-spacing:-0.73px;color:#212529;">D2L</span><span class="abs cb p" style="left:1567px;top:613px"></span>
<div class="abs rl" style="top:673px"></div><svg style="left:290.5px;top:650px" width="5" height="12" viewBox="0 0 5 12" fill="#a6abb1"><rect x="0" y="0.2" width="2.300" height="2.1"/><rect x="2.700" y="0.2" width="2.300" height="2.1"/><rect x="0" y="3.3" width="2.300" height="0.8"/><rect x="2.700" y="3.3" width="2.300" height="0.8"/><rect x="0" y="4.9" width="2.300" height="2.1"/><rect x="2.700" y="4.9" width="2.300" height="2.1"/><rect x="0" y="8.0" width="2.300" height="0.8"/><rect x="2.700" y="8.0" width="2.300" height="0.8"/><rect x="0" y="9.7" width="2.300" height="2.1"/><rect x="2.700" y="9.7" width="2.300" height="2.1"/></svg><span class="abs cb" style="left:313px;top:648px"></span><span class="t" style="left:623px;top:646px;font-size:14px;letter-spacing:-0.14px;color:#212529;">D2L: App Registration</span><span class="t" style="left:914.2px;top:646px;font-size:14px;color:#212529;width:8px;text-align:center;">1</span><span class="abs dot" style="left:976px;top:651px;background:#17a34a"></span><span class="abs cb p" style="left:1567px;top:649px"></span><span class="t ep" style="left:1786px;top:646px;width:71px;letter-spacing:0.33px;">/d2l/app-register</span>
<div class="abs rl" style="top:709px"></div><svg style="left:290.5px;top:686px" width="5" height="12" viewBox="0 0 5 12" fill="#a6abb1"><rect x="0" y="0.2" width="2.300" height="2.1"/><rect x="2.700" y="0.2" width="2.300" height="2.1"/><rect x="0" y="3.3" width="2.300" height="0.8"/><rect x="2.700" y="3.3" width="2.300" height="0.8"/><rect x="0" y="4.9" width="2.300" height="2.1"/><rect x="2.700" y="4.9" width="2.300" height="2.1"/><rect x="0" y="8.0" width="2.300" height="0.8"/><rect x="2.700" y="8.0" width="2.300" height="0.8"/><rect x="0" y="9.7" width="2.300" height="2.1"/><rect x="2.700" y="9.7" width="2.300" height="2.1"/></svg><span class="abs cb" style="left:313px;top:684px"></span><span class="t" style="left:623px;top:682px;font-size:14px;letter-spacing:-0.50px;color:#212529;">D2L: Get Users</span><span class="t" style="left:914.2px;top:682px;font-size:14px;color:#212529;width:8px;text-align:center;">1</span><span class="abs dot" style="left:976px;top:687px;background:#17a34a"></span><span class="abs cb p" style="left:1567px;top:685px"></span><span class="t ep" style="left:1786px;top:682px;width:71px;letter-spacing:0.32px;">/lms/d2l/users</span>
<div class="abs rl" style="top:745px"></div><svg style="left:290.5px;top:722px" width="5" height="12" viewBox="0 0 5 12" fill="#a6abb1"><rect x="0" y="0.2" width="2.300" height="2.1"/><rect x="2.700" y="0.2" width="2.300" height="2.1"/><rect x="0" y="3.3" width="2.300" height="0.8"/><rect x="2.700" y="3.3" width="2.300" height="0.8"/><rect x="0" y="4.9" width="2.300" height="2.1"/><rect x="2.700" y="4.9" width="2.300" height="2.1"/><rect x="0" y="8.0" width="2.300" height="0.8"/><rect x="2.700" y="8.0" width="2.300" height="0.8"/><rect x="0" y="9.7" width="2.300" height="2.1"/><rect x="2.700" y="9.7" width="2.300" height="2.1"/></svg><span class="abs cb" style="left:313px;top:720px"></span><span class="t" style="left:623px;top:718px;font-size:14px;letter-spacing:-0.06px;color:#212529;">D2L-Name Updates (618 - testing)</span><span class="t" style="left:914.2px;top:718px;font-size:14px;color:#212529;width:8px;text-align:center;">1</span><span class="abs dot" style="left:976px;top:723px;background:#4a5160"></span><span class="abs cb p" style="left:1567px;top:721px"></span><span class="t" style="left:1636.2px;top:718px;font-size:14px;letter-spacing:0.07px;color:#212529;">0 */5 * ? * *</span><span class="t ep" style="left:1786px;top:718px;width:71px;letter-spacing:0.21px;">/lmis/d2l/users</span>
<div class="abs rl" style="top:781px"></div><svg style="left:290.5px;top:758px" width="5" height="12" viewBox="0 0 5 12" fill="#a6abb1"><rect x="0" y="0.2" width="2.300" height="2.1"/><rect x="2.700" y="0.2" width="2.300" height="2.1"/><rect x="0" y="3.3" width="2.300" height="0.8"/><rect x="2.700" y="3.3" width="2.300" height="0.8"/><rect x="0" y="4.9" width="2.300" height="2.1"/><rect x="2.700" y="4.9" width="2.300" height="2.1"/><rect x="0" y="8.0" width="2.300" height="0.8"/><rect x="2.700" y="8.0" width="2.300" height="0.8"/><rect x="0" y="9.7" width="2.300" height="2.1"/><rect x="2.700" y="9.7" width="2.300" height="2.1"/></svg><span class="abs cb" style="left:313px;top:756px"></span><span class="t" style="left:623px;top:754px;font-size:14px;letter-spacing:-0.30px;color:#212529;">D2L: Update Users</span><span class="t" style="left:914.2px;top:754px;font-size:14px;color:#212529;width:8px;text-align:center;">1</span><span class="abs dot" style="left:976px;top:759px;background:#17a34a"></span><span class="abs cb p" style="left:1567px;top:757px"></span><span class="t ep" style="left:1786px;top:754px;width:71px;letter-spacing:0.32px;">/lms/d2l/users</span>
<div class="abs rl" style="top:817px"></div><svg style="left:290.5px;top:794px" width="5" height="12" viewBox="0 0 5 12" fill="#a6abb1"><rect x="0" y="0.2" width="2.300" height="2.1"/><rect x="2.700" y="0.2" width="2.300" height="2.1"/><rect x="0" y="3.3" width="2.300" height="0.8"/><rect x="2.700" y="3.3" width="2.300" height="0.8"/><rect x="0" y="4.9" width="2.300" height="2.1"/><rect x="2.700" y="4.9" width="2.300" height="2.1"/><rect x="0" y="8.0" width="2.300" height="0.8"/><rect x="2.700" y="8.0" width="2.300" height="0.8"/><rect x="0" y="9.7" width="2.300" height="2.1"/><rect x="2.700" y="9.7" width="2.300" height="2.1"/></svg><span class="abs cb" style="left:313px;top:792px"></span><svg style="left:376px;top:799px" width="11" height="8" viewBox="0 0 11 8"><path d="M1.300 1.500 5.300 4.900 9.300 1.500" fill="none" stroke="#555b61" stroke-width="1.100"/></svg><svg style="left:394px;top:794px" width="14.200" height="13" viewBox="0 0 15 13" preserveAspectRatio="none"><path fill="none" stroke="#868e96" stroke-width="1" stroke-linejoin="round" d="M1.600 3.200V2.400a1.200 1.200 0 0 1 1.200-1.200h3.100l1.200 1.400h5.400a1.200 1.200 0 0 1 1.200 1.200v.700M2.200 12.300h10.800a1.200 1.200 0 0 0 1.200-1.100l.500-6.500a1.100 1.100 0 0 0-1.100-1.200H1.700a1.100 1.100 0 0 0-1.100 1.200l.500 6.500a1.200 1.200 0 0 0 1.100 1.100Z"/></svg><span class="t" style="left:418.3px;top:792px;font-size:14px;letter-spacing:0.11px;color:#212529;">Student Mark Importer</span><span class="abs cb p" style="left:1567px;top:793px"></span>
<div class="abs rl" style="top:853px"></div><svg style="left:290.5px;top:830px" width="5" height="12" viewBox="0 0 5 12" fill="#a6abb1"><rect x="0" y="0.2" width="2.300" height="2.1"/><rect x="2.700" y="0.2" width="2.300" height="2.1"/><rect x="0" y="3.3" width="2.300" height="0.8"/><rect x="2.700" y="3.3" width="2.300" height="0.8"/><rect x="0" y="4.9" width="2.300" height="2.1"/><rect x="2.700" y="4.9" width="2.300" height="2.1"/><rect x="0" y="8.0" width="2.300" height="0.8"/><rect x="2.700" y="8.0" width="2.300" height="0.8"/><rect x="0" y="9.7" width="2.300" height="2.1"/><rect x="2.700" y="9.7" width="2.300" height="2.1"/></svg><span class="abs cb" style="left:313px;top:828px"></span><span class="t" style="left:623px;top:826px;font-size:14px;letter-spacing:-0.40px;color:#212529;">Test IQA</span><span class="t" style="left:914.2px;top:826px;font-size:14px;color:#212529;width:8px;text-align:center;">2</span><span class="abs dot" style="left:976px;top:831px;background:#17a34a"></span><span class="abs cb p" style="left:1567px;top:829px"></span><span class="t ep" style="left:1786px;top:826px;width:71px;letter-spacing:0.26px;">/test/smi/iqa</span>
<div class="abs rl" style="top:889px"></div><svg style="left:290.5px;top:866px" width="5" height="12" viewBox="0 0 5 12" fill="#a6abb1"><rect x="0" y="0.2" width="2.300" height="2.1"/><rect x="2.700" y="0.2" width="2.300" height="2.1"/><rect x="0" y="3.3" width="2.300" height="0.8"/><rect x="2.700" y="3.3" width="2.300" height="0.8"/><rect x="0" y="4.9" width="2.300" height="2.1"/><rect x="2.700" y="4.9" width="2.300" height="2.1"/><rect x="0" y="8.0" width="2.300" height="0.8"/><rect x="2.700" y="8.0" width="2.300" height="0.8"/><rect x="0" y="9.7" width="2.300" height="2.1"/><rect x="2.700" y="9.7" width="2.300" height="2.1"/></svg><span class="abs cb" style="left:313px;top:864px"></span><span class="t" style="left:623px;top:862px;font-size:14px;letter-spacing:-0.17px;color:#212529;">Courses: Get Offering Id</span><span class="t" style="left:914.2px;top:862px;font-size:14px;color:#212529;width:8px;text-align:center;">1</span><span class="abs dot" style="left:976px;top:867px;background:#17a34a"></span><span class="t" style="left:1076.3px;top:862px;font-size:14px;letter-spacing:-0.34px;color:#212529;">20 Jun 24 15:49:50</span><span class="t" style="left:1333.5px;top:862px;font-size:14px;color:#212529;width:8px;text-align:center;">0</span><span class="abs dot" style="left:1435.500px;top:867px;background:#17a34a"></span><span class="abs cb p" style="left:1567px;top:865px"></span><span class="t ep" style="left:1786px;top:862px;width:71px;letter-spacing:0.18px;">/esc/offering</span>
<div class="abs rl" style="top:925px"></div><svg style="left:290.5px;top:902px" width="5" height="12" viewBox="0 0 5 12" fill="#a6abb1"><rect x="0" y="0.2" width="2.300" height="2.1"/><rect x="2.700" y="0.2" width="2.300" height="2.1"/><rect x="0" y="3.3" width="2.300" height="0.8"/><rect x="2.700" y="3.3" width="2.300" height="0.8"/><rect x="0" y="4.9" width="2.300" height="2.1"/><rect x="2.700" y="4.9" width="2.300" height="2.1"/><rect x="0" y="8.0" width="2.300" height="0.8"/><rect x="2.700" y="8.0" width="2.300" height="0.8"/><rect x="0" y="9.7" width="2.300" height="2.1"/><rect x="2.700" y="9.7" width="2.300" height="2.1"/></svg><span class="abs cb" style="left:313px;top:900px"></span><span class="t" style="left:623px;top:898px;font-size:14px;letter-spacing:-0.22px;color:#212529;">SMI: Get Person (testing)</span><span class="t" style="left:914.2px;top:898px;font-size:14px;color:#212529;width:8px;text-align:center;">1</span><span class="abs dot" style="left:976px;top:903px;background:#17a34a"></span><span class="abs cb p" style="left:1567px;top:901px"></span><span class="t ep" style="left:1786px;top:898px;width:71px;letter-spacing:-0.04px;">/esc/smi/person</span>
<div class="abs rl" style="top:961px"></div><svg style="left:290.5px;top:938px" width="5" height="12" viewBox="0 0 5 12" fill="#a6abb1"><rect x="0" y="0.2" width="2.300" height="2.1"/><rect x="2.700" y="0.2" width="2.300" height="2.1"/><rect x="0" y="3.3" width="2.300" height="0.8"/><rect x="2.700" y="3.3" width="2.300" height="0.8"/><rect x="0" y="4.9" width="2.300" height="2.1"/><rect x="2.700" y="4.9" width="2.300" height="2.1"/><rect x="0" y="8.0" width="2.300" height="0.8"/><rect x="2.700" y="8.0" width="2.300" height="0.8"/><rect x="0" y="9.7" width="2.300" height="2.1"/><rect x="2.700" y="9.7" width="2.300" height="2.1"/></svg><span class="abs cb" style="left:313px;top:936px"></span><span class="t" style="left:623px;top:934px;font-size:14px;letter-spacing:-0.12px;color:#212529;">Get event (test)</span><span class="t" style="left:914.2px;top:934px;font-size:14px;color:#212529;width:8px;text-align:center;">1</span><span class="abs dot" style="left:976px;top:939px;background:#4a5160"></span><span class="abs cb p" style="left:1567px;top:937px"></span><span class="t ep" style="left:1786px;top:934px;width:71px;letter-spacing:0.18px;">/esc/offering</span>
<div class="abs" style="left:865px;top:135px;width:3px;height:819px;background:#dfe3e8"></div><div class="abs" style="left:1857px;top:170px;width:15px;height:784px;background:#fff"></div><div class="abs" style="left:1860px;top:193px;width:9px;height:519px;border-radius:5px;background:#8a8a8a"></div><svg style="left:1860px;top:178px" width="9" height="7" viewBox="0 0 9 7"><path d="M0 6.500 4.500 .500 9 6.500Z" fill="#7a7a7a"/></svg><svg style="left:1860px;top:940px" width="9" height="7" viewBox="0 0 9 7"><path d="M0 .500 4.500 6.500 9 .500Z" fill="#7a7a7a"/></svg></main>
<svg style="left:0;top:0" width="7" height="7" viewBox="0 0 7 7"><path d="M0 0H6.500A6.500 6.500 0 0 0 0 6.500Z" fill="#333"/></svg><svg style="left:1905px;top:0" width="7" height="7" viewBox="0 0 7 7"><path d="M7 0H.500A6.500 6.500 0 0 1 7 6.500Z" fill="#333"/></svg><svg style="left:0;top:948px" width="6" height="6" viewBox="0 0 6 6"><path d="M0 6H4A4 4 0 0 1 0 2Z" fill="#333"/></svg><svg style="left:1906px;top:948px" width="6" height="6" viewBox="0 0 6 6"><path d="M6 6H2A4 4 0 0 0 6 2Z" fill="#333"/></svg>
</body></html>
